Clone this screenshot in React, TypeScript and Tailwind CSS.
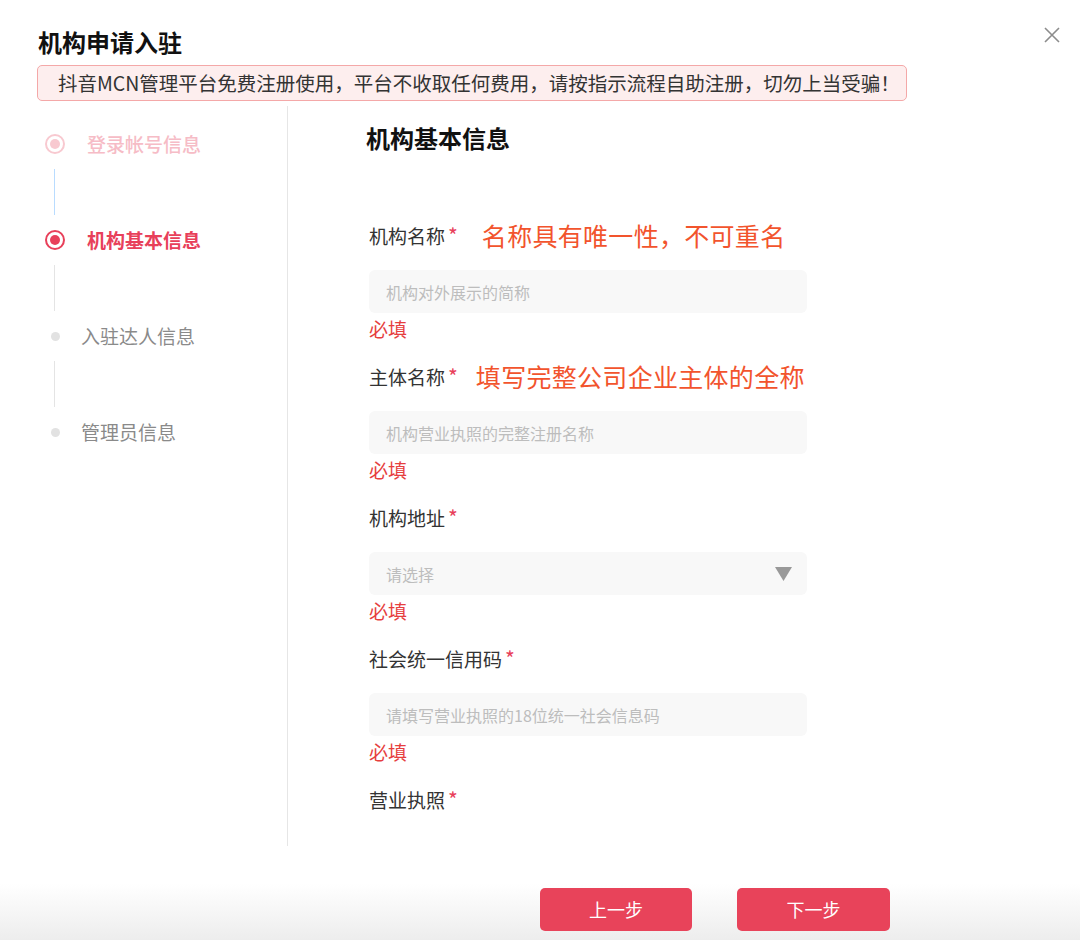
const font = { fontFamily: '"Noto Sans CJK SC", "Noto Sans", sans-serif' };

type Field = {
  label: string;
  hint?: string;
  hintGap?: string;
  placeholder: string;
  select?: boolean;
};

const fields: Field[] = [
  { label: "机构名称", hint: "名称具有唯一性，不可重名", hintGap: "ml-[24px]", placeholder: "机构对外展示的简称" },
  { label: "主体名称", hint: "填写完整公司企业主体的全称", hintGap: "ml-[18px]", placeholder: "机构营业执照的完整注册名称" },
  { label: "机构地址", placeholder: "请选择", select: true },
  { label: "社会统一信用码", placeholder: "请填写营业执照的18位统一社会信息码" },
];

function Label({ text }: { text: string }) {
  return (
    <span className="text-[19px] text-[#333] flex items-center">
      {text}
      <span className="text-[#e8405a] text-[21px] ml-[3px]">*</span>
    </span>
  );
}

function Steps() {
  return (
    <div className="w-[288px] h-[740px] border-r border-[#e6e6e6] pt-[13px] pl-[45px]">
      <div className="h-[50px] flex items-center">
        <span className="w-[20px] h-[20px] rounded-full border-2 border-[#f8c9d0] flex items-center justify-center">
          <span className="w-[10px] h-[10px] rounded-full bg-[#f8c9d0]" />
        </span>
        <span className="ml-[22px] text-[19px] font-medium text-[#f6bcc6]">登录帐号信息</span>
      </div>
      <div className="h-[46px] w-px ml-[9px] bg-[#b9dcff]" />
      <div className="h-[50px] flex items-center">
        <span className="w-[20px] h-[20px] rounded-full border-2 border-[#e8405a] flex items-center justify-center">
          <span className="w-[10px] h-[10px] rounded-full bg-[#e8405a]" />
        </span>
        <span className="ml-[22px] text-[19px] font-bold text-[#e8405a]">机构基本信息</span>
      </div>
      <div className="h-[46px] w-px ml-[9px] bg-[#e4e4e4]" />
      <div className="h-[50px] flex items-center">
        <span className="w-[20px] flex justify-center">
          <span className="w-[9px] h-[9px] rounded-full bg-[#e2e2e2]" />
        </span>
        <span className="ml-[16px] text-[19px] text-[#8a8a8a]">入驻达人信息</span>
      </div>
      <div className="h-[46px] w-px ml-[9px] bg-[#e4e4e4]" />
      <div className="h-[50px] flex items-center">
        <span className="w-[20px] flex justify-center">
          <span className="w-[9px] h-[9px] rounded-full bg-[#e2e2e2]" />
        </span>
        <span className="ml-[16px] text-[19px] text-[#8a8a8a]">管理员信息</span>
      </div>
    </div>
  );
}

export default function App() {
  return (
    <div className="relative w-[1080px] h-[940px] bg-white overflow-hidden" style={font}>
      <button className="absolute left-[1043px] top-[26px] w-[18px] h-[18px] text-[#8c8c8c]">
        <svg viewBox="0 0 18 18" width="18" height="18" fill="none" stroke="currentColor" strokeWidth="1.6">
          <path d="M2 2L16 16M16 2L2 16" />
        </svg>
      </button>

      <div className="pt-[27px] pl-[38px]">
        <h1 className="text-[24px] leading-[30px] font-bold text-[#111]">机构申请入驻</h1>
      </div>
      <div className="mt-[8px] ml-[37px] w-[870px] h-[36px] flex items-center pl-[20px] rounded-[5px] border border-[#f4a8a8] bg-[#fdeeee] text-[19.5px] text-[#333]">
        抖音MCN管理平台免费注册使用，平台不收取任何费用，请按指示流程自助注册，切勿上当受骗！
      </div>

      <div className="mt-[5px] flex">
        <Steps />
        <div className="pl-[79px] pt-[17px]">
          <h2 className="text-[24px] leading-[30px] font-bold text-[#111] ml-[-1px]">机构基本信息</h2>
          <div className="mt-[67px] flex flex-col">
            {fields.map((f, i) => (
              <div key={f.label} className={i === 0 ? "ml-[2px]" : "ml-[2px] mt-[20px]"}>
                <div className="h-[32px] flex items-center">
                  <Label text={f.label} />
                  {f.hint && (
                    <span className={`${f.hintGap} text-[25px] tracking-[0.3px] text-[#f2542d]`}>{f.hint}</span>
                  )}
                </div>
                <div className="mt-[18px] w-[438px] h-[43px] rounded-[6px] bg-[#f8f8f8] flex items-center justify-between pl-[17px] pr-[15px]">
                  <span className="text-[16px] text-[#bdbdbd]">{f.placeholder}</span>
                  {f.select && (
                    <svg width="17" height="14" viewBox="0 0 17 14">
                      <path d="M0 0H17L8.5 14Z" fill="#999" />
                    </svg>
                  )}
                </div>
                <div className="mt-[4px] h-[24px] leading-[24px] text-[19px] text-[#e63e3e]">必填</div>
              </div>
            ))}
            <div className="ml-[2px] mt-[20px] h-[32px] flex items-center">
              <Label text="营业执照" />
            </div>
          </div>
        </div>
      </div>

      <div className="h-[94px] bg-gradient-to-b from-white from-40% to-[#ededed] flex pt-[42px] pl-[540px] gap-[45px]">
        <button className="w-[152px] h-[43px] rounded-[5px] bg-[#e8435a] text-white text-[18px]">上一步</button>
        <button className="w-[153px] h-[43px] rounded-[5px] bg-[#e8435a] text-white text-[18px]">下一步</button>
      </div>
    </div>
  );
}
